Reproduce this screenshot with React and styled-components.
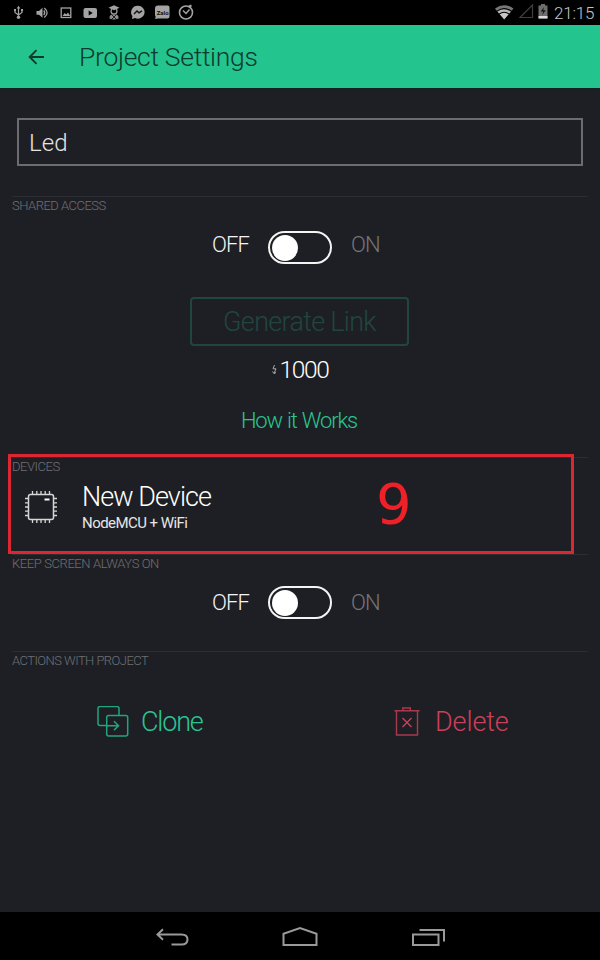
import React from 'react';
import styled, { createGlobalStyle } from 'styled-components';

const GlobalStyle = createGlobalStyle`
  * { box-sizing: border-box; }
  body { margin: 0; background: #1e1f24; }
`;

const Screen = styled.div`
  width: 600px;
  height: 960px;
  display: flex;
  flex-direction: column;
  overflow: hidden;
  background: #1e1f24;
  color: #fff;
  font-family: Roboto, "Liberation Sans", sans-serif;
  font-weight: 300;
`;

const StatusBar = styled.div`
  height: 25px;
  flex: none;
  display: flex;
  justify-content: space-between;
  background: #000;
`;

const StatusIcons = styled.svg`
  display: block;
  flex: none;
`;

const StatusRight = styled.div`
  display: flex;
`;

const Clock = styled.div`
  width: 47px;
  padding-left: 1px;
  font-size: 17px;
  line-height: 27px;
  letter-spacing: -0.2px;
  color: #c4c4c4;
`;

const Header = styled.header`
  height: 63px;
  flex: none;
  display: flex;
  align-items: center;
  padding-left: 28px;
  background: #24c48e;
  box-shadow: 0 2px 1px #14221f;
  color: #0e3b2e;
`;

const Title = styled.h1`
  margin: 0 0 0 33px;
  font-size: 26.5px;
  font-weight: 300;
  line-height: 32px;
  letter-spacing: -0.3px;
`;

const NameField = styled.div`
  height: 48px;
  flex: none;
  margin: 30px 17px 30px;
  border: 2px solid #6b6c70;
  padding-left: 10px;
  font-size: 24px;
  line-height: 46px;
  letter-spacing: 0.1px;
  color: #e4e4e6;
`;

const Section = styled.section`
  flex: none;
  height: ${(p) => p.$height}px;
  margin: 0 12px;
  border-top: 1px solid #2d2e33;
  display: flex;
  flex-direction: column;
`;

const SectionLabel = styled.div`
  font-size: 13px;
  font-weight: 300;
  line-height: 17px;
  height: 19px;
  flex: none;
  letter-spacing: ${(p) => p.$tracking}px;
  color: #6e6f74;
  white-space: nowrap;
`;

const ToggleRow = styled.div`
  display: grid;
  grid-template-columns: 1fr 64px 1fr;
  column-gap: 19px;
  height: 33px;
  margin-top: ${(p) => p.$top}px;
`;

const ToggleText = styled.span`
  font-size: 22px;
  line-height: ${(p) => p.$line}px;
  letter-spacing: ${(p) => (p.$muted ? -1 : -0.9)}px;
  text-align: ${(p) => (p.$muted ? 'left' : 'right')};
  color: ${(p) => (p.$muted ? '#75767a' : '#f4f4f4')};
`;

const Track = styled.div`
  height: 33px;
  display: flex;
  align-items: center;
  padding-left: 1.5px;
  border: 2px solid #f4f4f4;
  border-radius: 17px;
`;

const Knob = styled.div`
  width: 26px;
  height: 26px;
  border-radius: 50%;
  background: #fff;
`;

const GenerateButton = styled.div`
  align-self: center;
  width: 219px;
  height: 49px;
  margin: 33px 1px 0 0;
  border: 2px solid #204640;
  border-radius: 4px;
  text-align: center;
  font-size: 27px;
  line-height: 46px;
  letter-spacing: -0.7px;
  color: #204640;
`;

const Price = styled.div`
  display: flex;
  align-items: center;
  align-self: center;
  height: 30px;
  margin: 8px 0 0 1px;
  gap: 2px;
  font-size: 24.5px;
  letter-spacing: -1.3px;
`;

const HelpLink = styled.div`
  align-self: center;
  margin: 22px 2px 0 0;
  font-size: 22px;
  line-height: 30px;
  letter-spacing: -1.15px;
  word-spacing: 0.8px;
  color: #27c792;
`;

const DeviceRow = styled.div`
  display: flex;
  align-items: center;
  padding-left: 12px;
  height: 60px;
`;

const DeviceText = styled.div`
  margin: 2px 0 0 24px;
`;

const DeviceName = styled.div`
  font-size: 27px;
  line-height: 30px;
  letter-spacing: -0.95px;
`;

const DeviceType = styled.div`
  font-size: 15px;
  font-weight: 400;
  line-height: 23px;
  letter-spacing: -0.55px;
  color: #e6e6e6;
`;

const Actions = styled.div`
  display: grid;
  grid-template-columns: 297px 1fr;
  margin: 35px 0 0 85px;
`;

const Action = styled.div`
  display: flex;
  align-items: center;
  gap: ${(p) => p.$gap}px;
  height: 32px;
  font-size: 27px;
  line-height: 32px;
  letter-spacing: ${(p) => p.$tracking}px;
  color: ${(p) => p.$color};
`;

const NavBar = styled.nav`
  height: 48px;
  flex: none;
  margin-top: auto;
  display: grid;
  grid-template-columns: 128px 128px 128px;
  justify-content: center;
  justify-items: center;
  background: #000;
`;

const Icon = styled.svg`
  display: block;
  flex: none;
`;

const Highlight = styled.div`
  position: absolute;
  left: 8px;
  top: 454px;
  width: 566px;
  height: 100px;
  border: 3px solid #dc2632;
`;

const StepNumber = styled.div`
  position: absolute;
  left: 365px;
  top: 3px;
  font-family: "DejaVu Sans", sans-serif;
  font-weight: 400;
  font-size: 56px;
  line-height: 88px;
  color: #ee2028;
`;

function Toggle({ top, line }) {
  return (
    <ToggleRow $top={top}>
      <ToggleText $line={line}>OFF</ToggleText>
      <Track><Knob /></Track>
      <ToggleText $line={line} $muted>ON</ToggleText>
    </ToggleRow>
  );
}

function NotificationIcons() {
  return (
    <StatusIcons width="210" height="25" fill="none" stroke="#a3a3a3" strokeWidth="1.4">
      <path d="M18.500 7v10M15 10v2.500l3.500 2.500 3.500-2.500V10" strokeWidth="1.2" />
      <path d="M16.700 8.500l1.800-2.700 1.800 2.700zM14 9h2v2h-2zM21 9h2v2h-2z" fill="#a3a3a3" stroke="none" />
      <circle cx="18.500" cy="17.300" r="1.700" fill="#a3a3a3" stroke="none" />
      <path d="M36.500 11h2.500l3.500-3.200v10L39 14.800h-2.500z" fill="#a3a3a3" stroke="none" />
      <path d="M43.700 10.500q2 2.200 0 4.500M44.300 8q5.600 4.800 0 9.600" strokeWidth="1.300" />
      <rect x="61.200" y="8" width="9.600" height="9.500" strokeWidth="1.300" />
      <path d="M62.500 16l2.200-3 1.600 1.600 1.700-2 2.200 3.400z" fill="#a3a3a3" stroke="none" />
      <rect x="83.500" y="8" width="13.500" height="10" rx="2" fill="#a3a3a3" stroke="none" />
      <path d="M88.700 10.500v5l4-2.500z" fill="#000" stroke="none" />
      <path d="M108.500 7.800l5.500-2.500 5.500 2.500-5.500 2.400z" fill="#a3a3a3" stroke="none" />
      <circle cx="114" cy="11" r="3" strokeWidth="1.200" />
      <path d="M109.500 18.500q-.5-4.200 4.500-4.200t4.500 4.200q-4.500 2-9 0z" fill="#8f8f8f" stroke="none" />
      <path d="M112 15l4 4M116 15l-4 4" stroke="#222" strokeWidth="1" />
      <path d="M138 5.800a6.600 6.400 0 1 1-3 12.100l-3 1.200.4-3.100A6.600 6.400 0 0 1 138 5.800z" fill="#a3a3a3" stroke="none" />
      <path d="M134 14l3-3 2 1.800 3-2" stroke="#111" strokeWidth="1.400" />
      <path d="M158 5.500h9.500q2 0 2 2v9q0 2-2 2H158l-3 .5.700-2.300q-.7-.8-.7-1.700v-6.500q0-3 3-3z" fill="#a3a3a3" stroke="none" />
      <text x="156.700" y="14.700" fontFamily="Roboto, sans-serif" fontSize="6" fontWeight="700" fill="#111" stroke="none">Zalo</text>
      <circle cx="186" cy="12.500" r="6.500" strokeWidth="1.600" />
      <path d="M183 10.500l3 3 3.500-4" strokeWidth="1.500" />
      <path d="M189 6.500l2.500-1" strokeWidth="2" />
    </StatusIcons>
  );
}

function SystemIcons() {
  return (
    <StatusIcons width="59" height="25" viewBox="494 0 59 25" fill="none">
      <path d="M495 8.600q9.200-6.600 18.400 0l-1.700 2.200q-7.500-5.400-15 0z" fill="#777" />
      <path d="M497.400 11.600q6.800-4.900 13.600 0l-1.600 2q-5.200-3.700-10.400 0z" fill="#b8b8b8" />
      <path d="M499.700 14.300q4.500-3.200 9 0l-4.500 5.200z" fill="#c8c8c8" />
      <path d="M520 17.500h12.500V5z" stroke="#3e3e3e" strokeWidth="1.200" />
      <path d="M541 4h4v1.500h2.500v13h-9v-13h2.500z" fill="#6e6e6e" />
      <path d="M538.500 16h9v2.500h-9z" fill="#dadada" />
      <path d="M544 7l-3.300 4.500h2.500l-1 3.500 3.500-4.800h-2.500z" fill="#111" />
    </StatusIcons>
  );
}

export default function App() {
  return (
    <>
      <GlobalStyle />
      <Screen>
        <StatusBar>
          <NotificationIcons />
          <StatusRight>
            <SystemIcons />
            <Clock>21:15</Clock>
          </StatusRight>
        </StatusBar>
        <Header>
          <Icon width="18" height="18" fill="none" stroke="currentColor" strokeWidth="1.900">
            <path d="M16 9H2M8.500 2.200L1.700 9l6.800 6.800" />
          </Icon>
          <Title>Project Settings</Title>
        </Header>
        <NameField>Led</NameField>

        <Section $height={261}>
          <SectionLabel $tracking={-0.5}>SHARED ACCESS</SectionLabel>
          <Toggle top={15} line={27} />
          <GenerateButton>Generate Link</GenerateButton>
          <Price>
            <Icon width="5" height="9" fill="none" stroke="#aaa" strokeWidth="1">
              <path d="M2.500 0L1 3.800h3L2 8.500M.5 6.500L2 8.500l2-1" />
            </Icon>
            1000
          </Price>
          <HelpLink>How it Works</HelpLink>
        </Section>

        <Section $height={97}>
          <SectionLabel $tracking={-0.45}>DEVICES</SectionLabel>
          <DeviceRow>
            <Icon width="34" height="34" fill="none" stroke="#d6d6d6" strokeWidth="1.500">
              <rect x="4.500" y="4.500" width="25" height="25" rx="2" />
              <path d="M8.500 1v3M12.800 1v3M17 1v3M21.200 1v3M25.500 1v3M8.500 30v3M12.800 30v3M17 30v3M21.200 30v3M25.500 30v3M1 8.500h3M1 12.800h3M1 17h3M1 21.200h3M1 25.500h3M30 8.500h3M30 12.800h3M30 17h3M30 21.200h3M30 25.500h3" strokeWidth="1.300" />
              <path d="M20.500 9.500h5" strokeWidth="2" stroke="#fff" />
            </Icon>
            <DeviceText>
              <DeviceName>New Device</DeviceName>
              <DeviceType>NodeMCU + WiFi</DeviceType>
            </DeviceText>
          </DeviceRow>
        </Section>

        <Section $height={97}>
          <SectionLabel $tracking={-0.4}>KEEP SCREEN ALWAYS ON</SectionLabel>
          <Toggle top={12} line={33} />
        </Section>

        <Section $height={200}>
          <SectionLabel $tracking={-0.55}>ACTIONS WITH PROJECT</SectionLabel>
          <Actions>
            <Action $color="#2ac494" $gap={12} $tracking={-1.2}>
              <Icon width="32" height="32" fill="none" stroke="#22a47e" strokeWidth="1.500">
                <path d="M9.500 19.500H3q-2 0-2-2V2.500q0-2 2-2h17q2 0 2 2v6.500" />
                <rect x="9.700" y="9.500" width="21" height="20.500" rx="2" />
                <path d="M9.700 19.700H21.500M17 15.300l4.500 4.400-4.500 4.400" />
              </Icon>
              Clone
            </Action>
            <Action $color="#cb4059" $gap={15} $tracking={-0.1}>
              <Icon width="26" height="32" fill="none" stroke="#a93a4e" strokeWidth="1.400">
                <path d="M.5 4.700h25M2.500 4.700V29h21V4.700M8.800 4.700V2h7.500v2.700" />
                <path d="M8.500 12l9 9M17.500 12l-9 9" stroke="#cb4059" />
              </Icon>
              Delete
            </Action>
          </Actions>
        </Section>

        <NavBar>
          <Icon width="34" height="48" fill="none" stroke="#9a9a9a" strokeWidth="2">
            <path d="M2.500 22.500H26.500q6 0 6 5t-6 5H16.500M8 17.300L2.500 22.500l5.500 5.200" />
          </Icon>
          <Icon width="36" height="48" fill="none" stroke="#9a9a9a" strokeWidth="2">
            <path d="M1.500 33V21.800L18 16l16.500 5.800V33z" />
          </Icon>
          <Icon width="34" height="48" fill="none" stroke="#9a9a9a" strokeWidth="2">
            <path d="M2 22.500h25.500V33H2zM8.500 18H33v11.500" />
          </Icon>
        </NavBar>
      </Screen>
      <Highlight>
        <StepNumber>9</StepNumber>
      </Highlight>
    </>
  );
}
